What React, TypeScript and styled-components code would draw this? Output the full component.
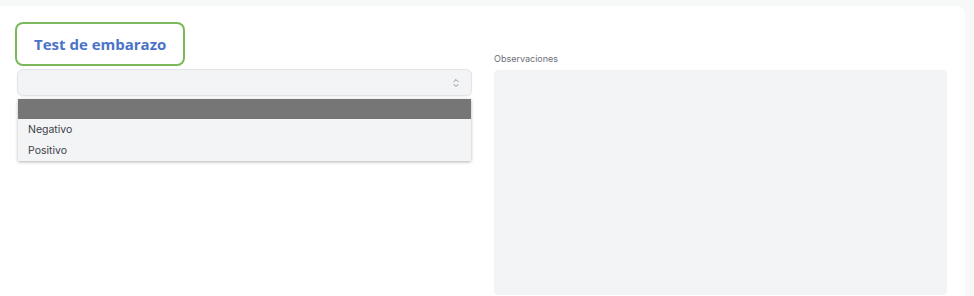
import { createGlobalStyle, styled } from "styled-components";

const Global = createGlobalStyle`
  html, body {
    margin: 0;
    padding: 0;
    background: #f7f8f8;
    font-family: Inter, "Liberation Sans", sans-serif;
  }
`;

const Card = styled.div`
  margin: 6px 9px 0 0;
  height: 290px;
  background: #ffffff;
  border-radius: 0 8px 0 0;
  padding: 16px 18px 0 17px;
  box-sizing: border-box;
  display: grid;
  grid-template-columns: 455px 453px;
  column-gap: 22px;
`;

const Column = styled.div`
  display: flex;
  flex-direction: column;
  position: relative;
`;

const TitleBox = styled.div`
  margin-left: -2px;
  width: 170px;
  height: 44px;
  box-sizing: border-box;
  border: 2px solid #7cb95a;
  border-radius: 8px;
  display: flex;
  align-items: center;
  padding-left: 17px;
  color: #4a73c8;
  font-family: "Open Sans", sans-serif;
  font-weight: 700;
  font-size: 15px;
`;

const SelectBox = styled.div`
  margin-top: 3px;
  height: 27px;
  box-sizing: border-box;
  background: #f3f4f6;
  border: 1px solid #e3e4e7;
  border-radius: 6px;
  box-shadow: 0 1px 2px rgba(0, 0, 0, 0.06);
  display: flex;
  align-items: center;
  justify-content: flex-end;
  padding-right: 12px;
`;

const Menu = styled.ul`
  position: absolute;
  top: 77px;
  left: 1px;
  right: 1px;
  margin: 0;
  padding: 0;
  list-style: none;
  background: #f3f4f6;
  box-shadow: 0 1px 3px rgba(0, 0, 0, 0.3);
`;

const Option = styled.li<{ $active?: boolean }>`
  height: ${(p) => (p.$active ? 20 : 21)}px;
  line-height: ${(p) => (p.$active ? 20 : 22)}px;
  padding-left: 10px;
  font-size: 10.5px;
  color: #3c4048;
  background: ${(p) => (p.$active ? "#767676" : "transparent")};
`;

const Label = styled.div`
  margin-top: 29px;
  height: 19px;
  line-height: 16px;
  font-size: 9px;
  color: #6b6f76;
`;

const TextArea = styled.div`
  height: 225px;
  background: #f3f4f6;
  border-radius: 4px;
`;

function Chevrons() {
  return (
    <svg width="6" height="10" viewBox="0 0 6 10" fill="none" stroke="#8a8d93" strokeWidth="1" strokeLinecap="round" strokeLinejoin="round">
      <path d="M1 3.5 L3 1.5 L5 3.5" />
      <path d="M1 6.5 L3 8.5 L5 6.5" />
    </svg>
  );
}

export default function App() {
  return (
    <>
      <Global />
      <Card>
        <Column>
          <TitleBox>Test de embarazo</TitleBox>
          <SelectBox>
            <Chevrons />
          </SelectBox>
          <Menu>
            <Option $active>&nbsp;</Option>
            <Option>Negativo</Option>
            <Option>Positivo</Option>
          </Menu>
        </Column>
        <Column>
          <Label>Observaciones</Label>
          <TextArea />
        </Column>
      </Card>
    </>
  );
}
